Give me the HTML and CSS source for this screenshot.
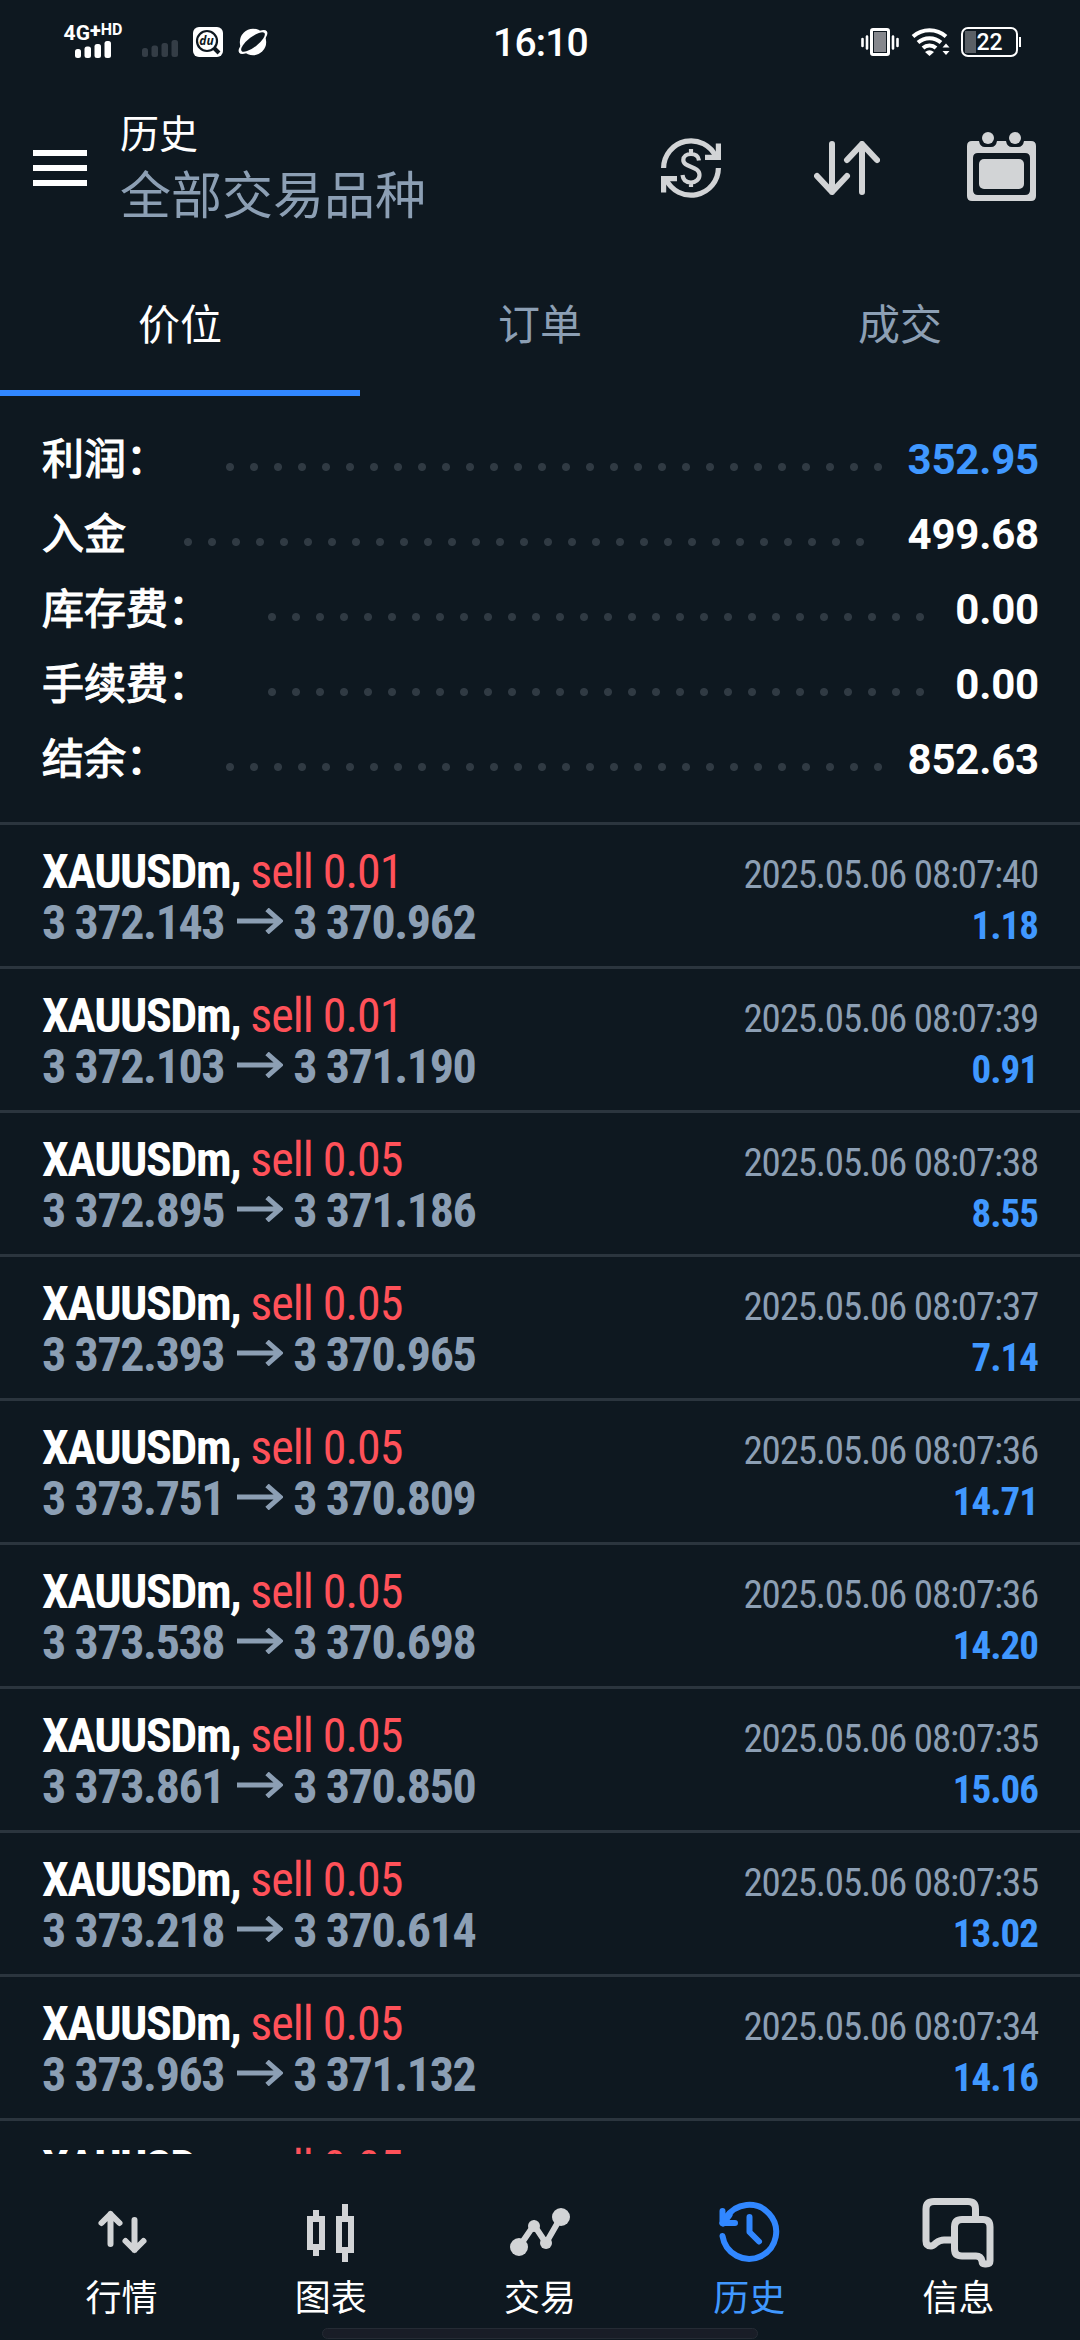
FILE: index.html
```
<!DOCTYPE html>
<html lang="zh-CN">

<head>
    <meta charset="UTF-8">
    <meta name="viewport" content="width=device-width, initial-scale=1.0">
    <title>历史</title>
    <link rel="stylesheet" href="styles.css">
</head>

<body>
    <div class="status">
        <div class="status-left">
            <div class="network">
                <span class="net-type">4G<b>+</b><i>HD</i></span>
                <svg width="36" height="17" viewBox="0 0 36 17" fill="#fff"><rect y="8" width="6" height="9" rx="2.5"/><rect x="9.5" y="5.5" width="6.5" height="11.5" rx="2.5"/><rect x="19.5" y="3" width="6.5" height="14" rx="2.5"/><rect x="29.5" width="6.5" height="17" rx="2.5"/></svg>
            </div>
            <svg class="sim2" width="36" height="17" viewBox="0 0 36 17" fill="#343d46"><rect y="8" width="6" height="9" rx="2.5"/><rect x="9.5" y="5.5" width="6.5" height="11.5" rx="2.5"/><rect x="19.5" y="3" width="6.5" height="14" rx="2.5"/><rect x="29.5" width="6.5" height="17" rx="2.5"/></svg>
            <svg class="app-du" width="30" height="30" viewBox="0 0 30 30">
                <rect width="30" height="30" rx="6" fill="#fff"/>
                <circle cx="14" cy="14" r="10" fill="none" stroke="#0e1820" stroke-width="2.2"/>
                <path d="M21 21l5 5" stroke="#0e1820" stroke-width="4"/>
                <text x="13.5" y="18" text-anchor="middle" class="du-text">du</text>
            </svg>
            <svg class="app-planet" width="32" height="30" viewBox="0 0 32 30">
                <circle cx="16" cy="15" r="13.2" fill="#fff"/>
                <ellipse cx="16" cy="15" rx="17.5" ry="6.6" transform="rotate(-38 16 15)" fill="#fff"/>
                <ellipse cx="16" cy="15" rx="14.5" ry="5" transform="rotate(-38 16 15)" fill="#0e1820"/>
            </svg>
        </div>
        <div class="clock">16:10</div>
        <div class="status-right">
            <svg class="vibrate" width="38" height="30" viewBox="0 0 38 30">
                <rect x="10.5" y="2.5" width="17" height="25" rx="1.5" fill="none" stroke="#fff" stroke-width="3"/>
                <rect x="13" y="5" width="12" height="20" fill="#85878d"/>
                <path d="M1.5 12v7M6 9.500v12M32 9.500v12M36.500 12v7" stroke="#fff" stroke-width="2.6" stroke-linecap="round"/>
            </svg>
            <svg class="wifi" width="40" height="30" viewBox="0 0 40 30">
                <g fill="none" stroke="#fff" stroke-width="4"><path d="M2 9.500a25 25 0 0 1 33 0"/><path d="M7 15.500a17.500 17.500 0 0 1 23 0"/><path d="M12 21a9.500 9.500 0 0 1 13 0"/></g>
                <path d="M14 25q4.500-3.500 9 0l-4.500 4z" fill="#fff"/>
                <path d="M31.500 20.500l3.500-4 3.500 4zM31.500 24l3.500 4 3.500-4z" fill="#fff"/>
            </svg>
            <div class="battery"><span>22</span></div>
        </div>
    </div>

    <div class="header">
        <svg class="menu" width="54" height="36" viewBox="0 0 54 36" fill="#fff"><rect width="54" height="6"/><rect y="15" width="54" height="6"/><rect y="30" width="54" height="6"/></svg>
        <div class="titles">
            <div class="title">历史</div>
            <div class="subtitle">全部交易品种</div>
        </div>
        <div class="actions">
            <svg width="60" height="60" viewBox="0 0 60 60" fill="none" stroke="#d2d4d6" stroke-width="5.2">
                <path d="M2.600 30A27.400 27.400 0 0 1 55 19"/>
                <path d="M57.400 30A27.400 27.400 0 0 1 5 41"/>
                <path d="M57.400 5.500V19.400H44M2.600 54.500V40.600H16"/>
                <path d="M38 22.500C37.500 18 34 16 30 16C25.500 16 22.300 18.500 22.300 22C22.300 30 38.500 27.500 38.500 37C38.500 41.500 34.500 44.500 30 44.500C25 44.500 22 41.500 21.500 37M30 11v5M30 44v5" stroke-width="4.2"/>
            </svg>
            <svg width="66" height="54" viewBox="0 0 66 54" fill="none" stroke="#d2d4d6" stroke-width="6" stroke-linecap="round" stroke-linejoin="round"><path d="M18 3V51M3 35L18 51L33 35M48 51V3M33 19L48 3L63 19"/></svg>
            <svg class="calendar" width="69" height="69" viewBox="0 0 69 69">
                <path fill="#d2d4d6" fill-rule="evenodd" d="M5 9H12Q13 15 18 15H24Q29 15 30 9H39Q40 15 45 15H51Q56 15 57 9H64Q69 9 69 14V64Q69 69 64 69H5Q0 69 0 64V14Q0 9 5 9ZM11 21Q6 21 6 26V58Q6 63 11 63H58Q63 63 63 58V26Q63 21 58 21Z"/>
                <rect x="12" y="27" width="45" height="30" rx="5" fill="#d2d4d6"/>
                <circle cx="21" cy="6" r="6" fill="#d2d4d6"/><circle cx="48" cy="6" r="6" fill="#d2d4d6"/>
            </svg>
        </div>
    </div>

    <div class="tabs">
        <div class="tab active">价位</div>
        <div class="tab">订单</div>
        <div class="tab">成交</div>
    </div>

    <div class="summary">
        <div class="sum-row"><span class="label">利润：</span><span class="dots"></span><b class="blue">352.95</b></div>
        <div class="sum-row"><span class="label">入金</span><span class="dots wide"></span><b>499.68</b></div>
        <div class="sum-row"><span class="label">库存费：</span><span class="dots"></span><b>0.00</b></div>
        <div class="sum-row"><span class="label">手续费：</span><span class="dots"></span><b>0.00</b></div>
        <div class="sum-row"><span class="label">结余：</span><span class="dots"></span><b>852.63</b></div>
    </div>

    <svg class="defs" width="0" height="0">
        <symbol id="arrow" viewBox="0 0 46 26"><path d="M0 13H43M30 1.500L43 13L30 24.500" fill="none" stroke="currentColor" stroke-width="5"/></symbol>
    </svg>

    <div class="deals">
        <div class="deal">
            <div class="line"><span class="symbol">XAUUSDm,</span><span class="side">sell 0.01</span><span class="date">2025.05.06 08:07:40</span></div>
            <div class="line"><span class="price">3 372.143</span><svg class="arrow"><use href="#arrow"/></svg><span class="price">3 370.962</span><span class="profit">1.18</span></div>
        </div>
        <div class="deal">
            <div class="line"><span class="symbol">XAUUSDm,</span><span class="side">sell 0.01</span><span class="date">2025.05.06 08:07:39</span></div>
            <div class="line"><span class="price">3 372.103</span><svg class="arrow"><use href="#arrow"/></svg><span class="price">3 371.190</span><span class="profit">0.91</span></div>
        </div>
        <div class="deal">
            <div class="line"><span class="symbol">XAUUSDm,</span><span class="side">sell 0.05</span><span class="date">2025.05.06 08:07:38</span></div>
            <div class="line"><span class="price">3 372.895</span><svg class="arrow"><use href="#arrow"/></svg><span class="price">3 371.186</span><span class="profit">8.55</span></div>
        </div>
        <div class="deal">
            <div class="line"><span class="symbol">XAUUSDm,</span><span class="side">sell 0.05</span><span class="date">2025.05.06 08:07:37</span></div>
            <div class="line"><span class="price">3 372.393</span><svg class="arrow"><use href="#arrow"/></svg><span class="price">3 370.965</span><span class="profit">7.14</span></div>
        </div>
        <div class="deal">
            <div class="line"><span class="symbol">XAUUSDm,</span><span class="side">sell 0.05</span><span class="date">2025.05.06 08:07:36</span></div>
            <div class="line"><span class="price">3 373.751</span><svg class="arrow"><use href="#arrow"/></svg><span class="price">3 370.809</span><span class="profit">14.71</span></div>
        </div>
        <div class="deal">
            <div class="line"><span class="symbol">XAUUSDm,</span><span class="side">sell 0.05</span><span class="date">2025.05.06 08:07:36</span></div>
            <div class="line"><span class="price">3 373.538</span><svg class="arrow"><use href="#arrow"/></svg><span class="price">3 370.698</span><span class="profit">14.20</span></div>
        </div>
        <div class="deal">
            <div class="line"><span class="symbol">XAUUSDm,</span><span class="side">sell 0.05</span><span class="date">2025.05.06 08:07:35</span></div>
            <div class="line"><span class="price">3 373.861</span><svg class="arrow"><use href="#arrow"/></svg><span class="price">3 370.850</span><span class="profit">15.06</span></div>
        </div>
        <div class="deal">
            <div class="line"><span class="symbol">XAUUSDm,</span><span class="side">sell 0.05</span><span class="date">2025.05.06 08:07:35</span></div>
            <div class="line"><span class="price">3 373.218</span><svg class="arrow"><use href="#arrow"/></svg><span class="price">3 370.614</span><span class="profit">13.02</span></div>
        </div>
        <div class="deal">
            <div class="line"><span class="symbol">XAUUSDm,</span><span class="side">sell 0.05</span><span class="date">2025.05.06 08:07:34</span></div>
            <div class="line"><span class="price">3 373.963</span><svg class="arrow"><use href="#arrow"/></svg><span class="price">3 371.132</span><span class="profit">14.16</span></div>
        </div>
        <div class="deal">
            <div class="line"><span class="symbol">XAUUSDm,</span><span class="side">sell 0.05</span></div>
        </div>
    </div>

    <div class="nav">
        <div class="nav-item">
            <svg width="72" height="72" viewBox="0 0 72 72" fill="none" stroke="#d2d4d6" stroke-width="6" stroke-linecap="round" stroke-linejoin="round"><path d="M24.500 48V18M15.500 27L24.500 18L33.500 27M48.500 24V54M39.500 45L48.500 54L57.500 45"/></svg>
            <span>行情</span>
        </div>
        <div class="nav-item">
            <svg width="72" height="72" viewBox="0 0 72 72" fill="none" stroke="#d2d4d6" stroke-width="6"><path d="M15 23H27V51H15ZM21 14V20M21 54V60M44 23H56V54H44ZM50 8V20M50 57V66"/></svg>
            <span>图表</span>
        </div>
        <div class="nav-item">
            <svg width="72" height="72" viewBox="0 0 72 72" fill="#d2d4d6"><path d="M15 51L30 29L42 47L57 21" fill="none" stroke="#d2d4d6" stroke-width="6"/><circle cx="15" cy="51" r="9"/><circle cx="30" cy="30" r="6"/><circle cx="42" cy="47" r="6"/><circle cx="57" cy="21" r="9"/></svg>
            <span>交易</span>
        </div>
        <div class="nav-item selected">
            <svg width="72" height="72" viewBox="0 0 72 72" fill="none" stroke="#3187ff" stroke-width="6" stroke-linecap="round" stroke-linejoin="round"><path d="M9.500 40A27 27 0 1 0 13 22M9.500 15V27H22"/><path d="M10 27L16 19" stroke-width="7"/><path d="M36.500 21V36L46 45.500"/></svg>
            <span>历史</span>
        </div>
        <div class="nav-item">
            <svg width="72" height="72" viewBox="0 0 72 72" fill="none" stroke="#d2d4d6" stroke-width="7" stroke-linejoin="round"><path d="M53.500 22V13Q53.500 5.500 46 5.500H12Q4 5.500 4 13V45Q4 50 9 50Q11 50 14 47Q18 44 22 44H32"/><path d="M40 23.500H61Q68 23.500 68 31V65Q68 68 64 68H63Q60 68 60 65Q59 60 54 60H40Q32.500 60 32.500 53V31Q32.500 23.500 40 23.500Z"/></svg>
            <span>信息</span>
        </div>
    </div>
    <div class="home-bar"></div>
</body>

</html>
```
FILE: styles.css
```
* {
    box-sizing: border-box;
}

body {
    font-family: Roboto, "Noto Sans CJK SC", sans-serif;
    background-color: #0e1820;
    color: #fff;
    margin: 0;
    width: 1080px;
    height: 2340px;
    overflow: hidden;
    display: flex;
    flex-direction: column;
}

svg {
    display: block;
    flex: none;
}

.defs {
    height: 0;
}

/* status bar */
.status {
    height: 84px;
    display: grid;
    grid-template-columns: 1fr auto 1fr;
    align-items: center;
    padding: 0 62px 0 63px;
}

.status-left,
.status-right {
    display: flex;
    align-items: center;
}

.status-right {
    justify-content: flex-end;
    gap: 10px;
}

.vibrate {
    margin-right: 2px;
}

.network {
    width: 60px;
    height: 32px;
    display: flex;
    flex-direction: column;
    align-items: center;
    margin-top: -3px;
}

.net-type {
    font-size: 21px;
    line-height: 16px;
    font-weight: 700;
    white-space: nowrap;
    display: flex;
}

.net-type b {
    font-size: 20px;
    line-height: 10px;
}

.net-type i {
    font-size: 16px;
    line-height: 10px;
    font-style: normal;
}

.sim2 {
    margin: 12px 0 0 19px;
}

.app-du {
    margin-left: 15px;
}

.app-planet {
    margin-left: 14px;
}

.du-text {
    font: italic 700 12px "Open Sans", sans-serif;
    fill: #0e1820;
}

.clock {
    font-size: 39px;
    font-weight: 500;
    line-height: 46px;
    letter-spacing: -0.8px;
    padding-top: 1px;
}

.battery {
    width: 57px;
    height: 30px;
    border: 2px solid #fff;
    border-radius: 7px;
    position: relative;
    text-align: center;
    font-size: 23px;
    font-weight: 500;
    line-height: 27px;
    background: linear-gradient(#5a6066, #5a6066) 2px 2px / 11px 22px no-repeat;
}

.battery::after {
    content: "";
    position: absolute;
    right: -5px;
    top: 8px;
    width: 2px;
    height: 10px;
    background-color: #fff;
}

/* header */
.header {
    height: 168px;
    display: flex;
    align-items: center;
    padding: 0 44px 0 33px;
}

.titles {
    margin-left: 33px;
}

.title {
    font-size: 39px;
    line-height: 55px;
}

.subtitle {
    font-size: 51px;
    line-height: 63px;
    color: #8c9fb4;
    padding-top: 2px;
}

.actions {
    margin-left: auto;
    display: flex;
    align-items: center;
    gap: 90px;
}

.actions svg:first-child {
    margin-right: 3px;
}

.calendar {
    margin: 0 0 3px -3px;
}

/* tabs */
.tabs {
    height: 144px;
    display: flex;
}

.tab {
    flex: 1;
    text-align: center;
    font-size: 42px;
    line-height: 148px;
    color: #8c9fb4;
}

.active {
    color: #fff;
    border-bottom: 6px solid #3187ff;
}

/* totals */
.summary {
    height: 426px;
    padding: 26px 42px 0;
}

.sum-row {
    height: 75px;
    display: flex;
    font-size: 42px;
    line-height: 75px;
}

.label {
    -webkit-text-stroke: 1.2px #fff;
}

.sum-row b {
    margin-left: auto;
    margin-right: -1px;
    font-weight: 700;
    letter-spacing: -0.2px;
}

.dots {
    width: 672px;
    height: 24px;
    margin: 33px 0 0 50px;
    background: radial-gradient(circle at 12px 12px, #303a43 3.5px, transparent 4.5px) 0 0 / 24px 24px;
}

.wide {
    width: 696px;
}

.blue {
    color: #4098ff;
}

/* deal list */
.deals {
    height: 1332px;
    overflow: hidden;
    font-stretch: 75%;
}

.deal {
    height: 144px;
    border-top: 3px solid #2b353e;
    padding: 21px 42px 0;
}

.line {
    display: flex;
    align-items: baseline;
    font-size: 48px;
    line-height: 51px;
    height: 51px;
    white-space: pre;
}

.symbol {
    font-weight: 700;
    letter-spacing: -1.5px;
}

.side {
    color: #ff5159;
    margin-left: 10px;
    letter-spacing: -1px;
}

.price {
    color: #8c9fb4;
    font-weight: 700;
    letter-spacing: -1.4px;
}

.arrow {
    width: 46px;
    height: 26px;
    margin: 11px 10px 0 13px;
    color: #8c9fb4;
    align-self: flex-start;
}

.date,
.profit {
    margin-left: auto;
    font-size: 39px;
}

.date {
    color: #8c9fb4;
    letter-spacing: -1.2px;
}

.profit {
    color: #4098ff;
    font-weight: 700;
    letter-spacing: -1px;
}

/* bottom navigation */
.nav {
    height: 174px;
    padding: 42px 17px 0;
    display: flex;
}

.nav-item {
    flex: 1;
    display: flex;
    flex-direction: column;
    align-items: center;
    font-size: 36px;
    line-height: 62px;
}

.selected {
    color: #4098ff;
}

.home-bar {
    width: 436px;
    height: 11px;
    margin: 0 auto;
    border: 1px solid #252b34;
    border-radius: 6px;
    background-color: #191d27;
}
```
